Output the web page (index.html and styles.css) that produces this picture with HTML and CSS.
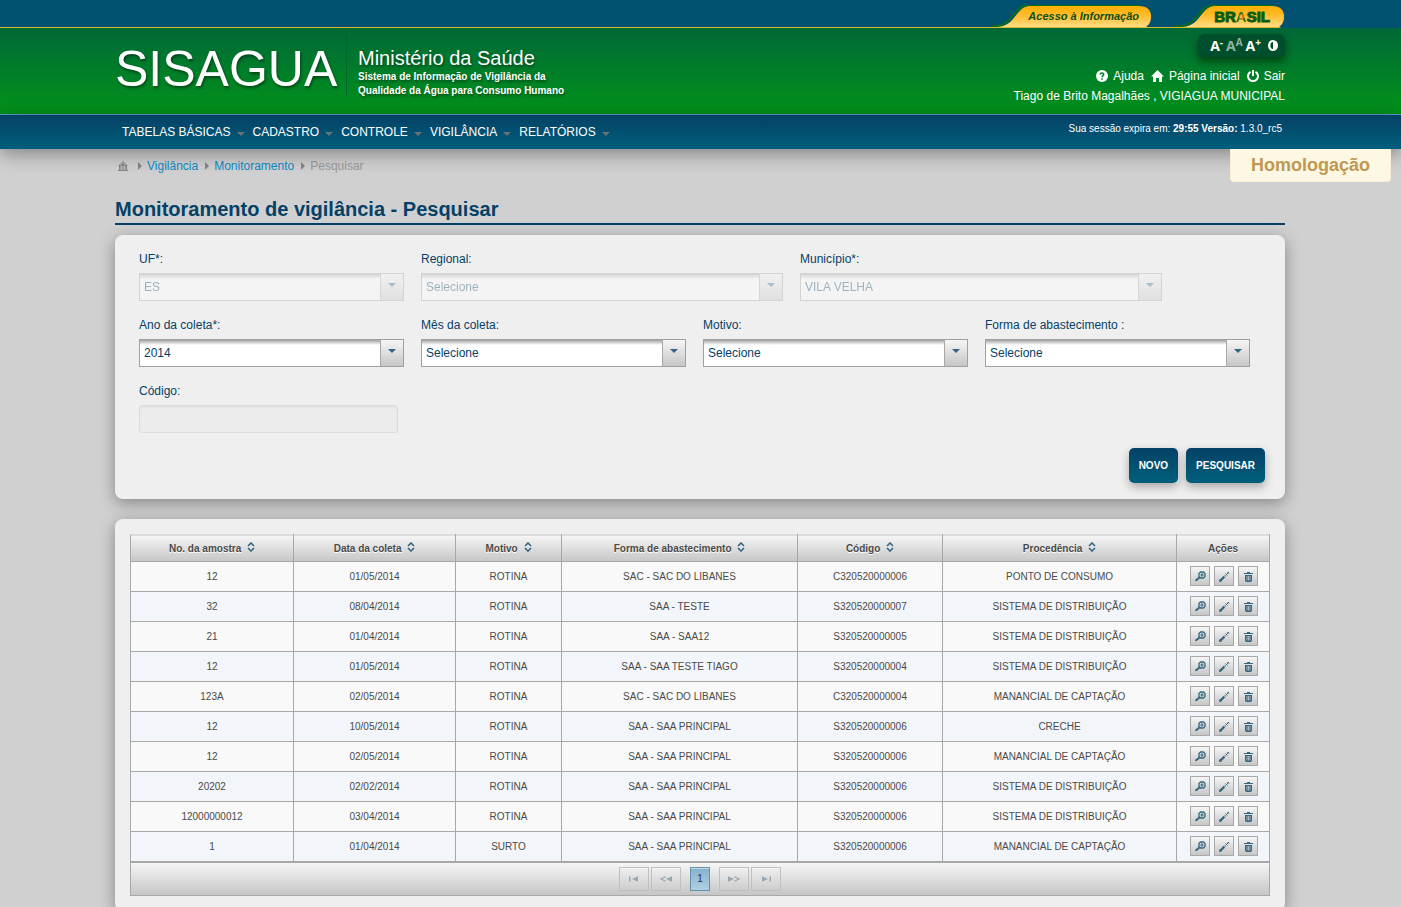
FILE: index.html
```html
<!DOCTYPE html>
<html lang="pt-BR">
<head>
<meta charset="utf-8">
<meta name="viewport" content="width=device-width, initial-scale=1">
<title>SISAGUA - Monitoramento de vigilância</title>
<link rel="stylesheet" href="styles.css">
</head>
<body>
<svg class="sprite" aria-hidden="true">
  <symbol id="tab-long" viewBox="0 0 160 22"><path d="M0 21.500C16 21 18 15 24 8C29 2 32 .5 38 .5H149" fill="none" stroke="#0a6b1c" stroke-width="2"/><path d="M6 22C18 21 21 15 26 9C31 3 34 1 40 1H148C156 1 160 5 160 11C160 16 159 19 155 22Z" fill="url(#gold)"/></symbol>
  <symbol id="tab-short" viewBox="0 0 110 22"><path d="M0 21.500C18 21 20 15 26 8C31 2 34 .5 40 .5H100" fill="none" stroke="#0a6b1c" stroke-width="2"/><path d="M8 22C20 21 23 15 28 9C33 3 36 1 42 1H98C106 1 110 5 110 11C110 16 109 19 105 22Z" fill="url(#gold)"/></symbol>
  <linearGradient id="gold" x1="0" y1="0" x2="0" y2="1"><stop offset="0" stop-color="#ffae00"/><stop offset=".45" stop-color="#ffbc2b"/><stop offset="1" stop-color="#ffdc85"/></linearGradient>
  <symbol id="i-help" viewBox="0 0 12 12"><circle cx="6" cy="6" r="6" fill="#fff"/><path d="M4.200 4.600C4.300 2.300 7.800 2.500 7.700 4.600C7.600 5.700 6 5.800 6 7.200M6 8.200V9.700" fill="none" stroke="#007a2b" stroke-width="1.500"/></symbol>
  <symbol id="i-house" viewBox="0 0 13 12"><path d="M6.500 0L13 6.500H11V12H8V8H5V12H2V6.500H0Z" fill="#fff"/></symbol>
  <symbol id="i-power" viewBox="0 0 12 12"><path d="M3.500 1.800A5 5 0 1 0 8.500 1.800M6 0V6" fill="none" stroke="#fff" stroke-width="2"/></symbol>
  <symbol id="i-contrast" viewBox="0 0 10 11"><ellipse cx="5" cy="5.500" rx="5" ry="5.500" fill="#fff"/><path d="M5 2C1.500 2 1.500 9 5 9Z" fill="#004d2c"/></symbol>
  <symbol id="i-home" viewBox="0 0 10 10"><path d="M5 0L10 5H9V9H10V10H0V9H1V5H0Z" fill="#858585"/><path d="M3 9V5H4V9M6 9V5H7V9M2 4L5 1.500L8 4" fill="none" stroke="#d0d0d0" stroke-width=".8"/></symbol>
  <symbol id="i-sort" viewBox="0 0 8 10"><path d="M1 4L4 1L7 4M1 6L4 9L7 6" fill="none" stroke="#38667f" stroke-width="1.600"/></symbol>
  <symbol id="i-view" viewBox="0 0 20 20"><path d="M10.500 6H13.500L15 7.500V10.500L13.500 12H10.500L9 10.500V7.500Z" fill="none" stroke="#38667f" stroke-width="1.300"/><path d="M10.300 9H13.700M12 7.300V10.700" fill="none" stroke="#38667f" stroke-width="1.200"/><path d="M9.500 11.500L5.500 14.800" fill="none" stroke="#38667f" stroke-width="2"/></symbol>
  <symbol id="i-edit" viewBox="0 0 20 20"><path d="M6.500 14.500L11.500 9.500" fill="none" stroke="#38667f" stroke-width="2.200" stroke-dasharray="5.500 1 1"/><path d="M5.500 15.500L6 13.500L7.500 15ZM11.500 7.500L13.500 9.500M12.500 8.500L15 6M13.500 6L15 7.500" fill="#38667f" stroke="#38667f" stroke-width="1"/></symbol>
  <symbol id="i-trash" viewBox="0 0 20 20"><path d="M6 7H15V8H6ZM9 6H12V7H9Z" fill="#38667f"/><path d="M7 9H14V14.500L13 16H8L7 14.500Z" fill="#38667f"/><path d="M9 10V14.500M10.500 10V14.500M12 10V14.500" stroke="#d8d8d8" stroke-width=".7"/></symbol>
  <symbol id="i-first" viewBox="0 0 10 6"><path d="M0 .5H1.500V5.500H0ZM3 3L9 .3V5.700Z" fill="#98a7af"/></symbol>
  <symbol id="i-prev" viewBox="0 0 12 6"><path d="M5.500 .8L1 3L5.500 5.200" fill="none" stroke="#98a7af" stroke-width="1.200"/><path d="M6 3L12 .3V5.700Z" fill="#98a7af"/></symbol>
</svg>

<div class="gov-bar">
  <div class="container gov-inner">
    <a class="gov-tab gov-info" href="#"><svg class="tab-shape" width="160" height="22"><use href="#tab-long"/></svg><span>Acesso à Informação</span></a>
    <a class="gov-tab gov-brasil" href="#"><svg class="tab-shape" width="110" height="22"><use href="#tab-short"/></svg><span>BR<span class="brasil-a">A</span>SIL</span></a>
  </div>
</div>

<header class="header">
  <div class="container header-inner">
    <div class="brand">
      <a class="logo" href="#">SISAGUA</a>
      <div class="ministry"><p class="ministry-name">Ministério da Saúde</p><p class="ministry-sub">Sistema de Informação de Vigilância da<br>Qualidade da Água para Consumo Humano</p></div>
    </div>
    <div class="account">
      <div class="access">
        <button type="button" aria-label="Diminuir fonte">A<sup>-</sup></button>
        <button type="button" class="dim" aria-label="Fonte normal">A<sup>A</sup></button>
        <button type="button" aria-label="Aumentar fonte">A<sup>+</sup></button>
        <button type="button" class="contrast" aria-label="Contraste"><svg width="10" height="11"><use href="#i-contrast"/></svg></button>
      </div>
      <div class="quick">
        <a href="#"><svg width="12" height="12"><use href="#i-help"/></svg>Ajuda</a>
        <a href="#"><svg width="13" height="12"><use href="#i-house"/></svg>Página inicial</a>
        <a href="#"><svg width="12" height="12"><use href="#i-power"/></svg>Sair</a>
      </div>
      <p class="user">Tiago de Brito Magalhães , VIGIAGUA MUNICIPAL</p>
    </div>
  </div>
</header>

<div class="nav-bar">
  <div class="container nav-inner">
    <nav class="menu"><a href="#">TABELAS BÁSICAS</a><a href="#">CADASTRO</a><a href="#">CONTROLE</a><a href="#">VIGILÂNCIA</a><a href="#">RELATÓRIOS</a></nav>
    <p class="session">Sua sessão expira em: <b>29:55 Versão:</b> 1.3.0_rc5</p>
  </div>
  <div class="environment">Homologação</div>
</div>

<main class="container">
  <nav class="crumbs" aria-label="Trilha"><a href="#" aria-label="Início"><svg width="10" height="10"><use href="#i-home"/></svg></a><a href="#">Vigilância</a><a href="#">Monitoramento</a><span>Pesquisar</span></nav>
  <h1>Monitoramento de vigilância - Pesquisar</h1>

  <form class="panel search">
    <div class="fields">
      <div class="field"><label for="uf">UF*:</label><span class="select off"><select id="uf" disabled><option>ES</option></select></span></div>
      <div class="field wide"><label for="regional">Regional:</label><span class="select off"><select id="regional" disabled><option>Selecione</option></select></span></div>
      <div class="field wide"><label for="municipio">Município*:</label><span class="select off"><select id="municipio" disabled><option>VILA VELHA</option></select></span></div>
    </div>
    <div class="fields">
      <div class="field"><label for="ano">Ano da coleta*:</label><span class="select"><select id="ano"><option>2014</option></select></span></div>
      <div class="field"><label for="mes">Mês da coleta:</label><span class="select"><select id="mes"><option>Selecione</option></select></span></div>
      <div class="field"><label for="motivo">Motivo:</label><span class="select"><select id="motivo"><option>Selecione</option></select></span></div>
      <div class="field"><label for="forma">Forma de abastecimento :</label><span class="select"><select id="forma"><option>Selecione</option></select></span></div>
    </div>
    <div class="fields">
      <div class="field"><label for="codigo">Código:</label><input id="codigo" type="text" disabled></div>
    </div>
    <div class="form-actions"><button type="button">NOVO</button><button type="submit">PESQUISAR</button></div>
  </form>

  <section class="panel results">
    <table>
      <colgroup><col class="c-sample"><col class="c-date"><col class="c-reason"><col class="c-supply"><col class="c-code"><col class="c-origin"><col class="c-actions"></colgroup>
      <thead><tr>
        <th>No. da amostra <svg width="8" height="10"><use href="#i-sort"/></svg></th>
        <th>Data da coleta <svg width="8" height="10"><use href="#i-sort"/></svg></th>
        <th>Motivo <svg width="8" height="10"><use href="#i-sort"/></svg></th>
        <th>Forma de abastecimento <svg width="8" height="10"><use href="#i-sort"/></svg></th>
        <th>Código <svg width="8" height="10"><use href="#i-sort"/></svg></th>
        <th>Procedência <svg width="8" height="10"><use href="#i-sort"/></svg></th>
        <th>Ações</th>
      </tr></thead>
      <tbody>
        <tr><td>12</td><td>01/05/2014</td><td>ROTINA</td><td>SAC - SAC DO LIBANES</td><td>C320520000006</td><td>PONTO DE CONSUMO</td><td><div class="row-actions"><button type="button" aria-label="Visualizar"><svg><use href="#i-view"/></svg></button><button type="button" aria-label="Editar"><svg><use href="#i-edit"/></svg></button><button type="button" aria-label="Excluir"><svg><use href="#i-trash"/></svg></button></div></td></tr>
        <tr><td>32</td><td>08/04/2014</td><td>ROTINA</td><td>SAA - TESTE</td><td>S320520000007</td><td>SISTEMA DE DISTRIBUIÇÃO</td><td><div class="row-actions"><button type="button" aria-label="Visualizar"><svg><use href="#i-view"/></svg></button><button type="button" aria-label="Editar"><svg><use href="#i-edit"/></svg></button><button type="button" aria-label="Excluir"><svg><use href="#i-trash"/></svg></button></div></td></tr>
        <tr><td>21</td><td>01/04/2014</td><td>ROTINA</td><td>SAA - SAA12</td><td>S320520000005</td><td>SISTEMA DE DISTRIBUIÇÃO</td><td><div class="row-actions"><button type="button" aria-label="Visualizar"><svg><use href="#i-view"/></svg></button><button type="button" aria-label="Editar"><svg><use href="#i-edit"/></svg></button><button type="button" aria-label="Excluir"><svg><use href="#i-trash"/></svg></button></div></td></tr>
        <tr><td>12</td><td>01/05/2014</td><td>ROTINA</td><td>SAA - SAA TESTE TIAGO</td><td>S320520000004</td><td>SISTEMA DE DISTRIBUIÇÃO</td><td><div class="row-actions"><button type="button" aria-label="Visualizar"><svg><use href="#i-view"/></svg></button><button type="button" aria-label="Editar"><svg><use href="#i-edit"/></svg></button><button type="button" aria-label="Excluir"><svg><use href="#i-trash"/></svg></button></div></td></tr>
        <tr><td>123A</td><td>02/05/2014</td><td>ROTINA</td><td>SAC - SAC DO LIBANES</td><td>C320520000004</td><td>MANANCIAL DE CAPTAÇÃO</td><td><div class="row-actions"><button type="button" aria-label="Visualizar"><svg><use href="#i-view"/></svg></button><button type="button" aria-label="Editar"><svg><use href="#i-edit"/></svg></button><button type="button" aria-label="Excluir"><svg><use href="#i-trash"/></svg></button></div></td></tr>
        <tr><td>12</td><td>10/05/2014</td><td>ROTINA</td><td>SAA - SAA PRINCIPAL</td><td>S320520000006</td><td>CRECHE</td><td><div class="row-actions"><button type="button" aria-label="Visualizar"><svg><use href="#i-view"/></svg></button><button type="button" aria-label="Editar"><svg><use href="#i-edit"/></svg></button><button type="button" aria-label="Excluir"><svg><use href="#i-trash"/></svg></button></div></td></tr>
        <tr><td>12</td><td>02/05/2014</td><td>ROTINA</td><td>SAA - SAA PRINCIPAL</td><td>S320520000006</td><td>MANANCIAL DE CAPTAÇÃO</td><td><div class="row-actions"><button type="button" aria-label="Visualizar"><svg><use href="#i-view"/></svg></button><button type="button" aria-label="Editar"><svg><use href="#i-edit"/></svg></button><button type="button" aria-label="Excluir"><svg><use href="#i-trash"/></svg></button></div></td></tr>
        <tr><td>20202</td><td>02/02/2014</td><td>ROTINA</td><td>SAA - SAA PRINCIPAL</td><td>S320520000006</td><td>SISTEMA DE DISTRIBUIÇÃO</td><td><div class="row-actions"><button type="button" aria-label="Visualizar"><svg><use href="#i-view"/></svg></button><button type="button" aria-label="Editar"><svg><use href="#i-edit"/></svg></button><button type="button" aria-label="Excluir"><svg><use href="#i-trash"/></svg></button></div></td></tr>
        <tr><td>12000000012</td><td>03/04/2014</td><td>ROTINA</td><td>SAA - SAA PRINCIPAL</td><td>S320520000006</td><td>SISTEMA DE DISTRIBUIÇÃO</td><td><div class="row-actions"><button type="button" aria-label="Visualizar"><svg><use href="#i-view"/></svg></button><button type="button" aria-label="Editar"><svg><use href="#i-edit"/></svg></button><button type="button" aria-label="Excluir"><svg><use href="#i-trash"/></svg></button></div></td></tr>
        <tr><td>1</td><td>01/04/2014</td><td>SURTO</td><td>SAA - SAA PRINCIPAL</td><td>S320520000006</td><td>MANANCIAL DE CAPTAÇÃO</td><td><div class="row-actions"><button type="button" aria-label="Visualizar"><svg><use href="#i-view"/></svg></button><button type="button" aria-label="Editar"><svg><use href="#i-edit"/></svg></button><button type="button" aria-label="Excluir"><svg><use href="#i-trash"/></svg></button></div></td></tr>
      </tbody>
    </table>
    <div class="pager">
      <button type="button" disabled aria-label="Primeira"><svg width="10" height="6"><use href="#i-first"/></svg></button>
      <button type="button" disabled aria-label="Anterior"><svg width="12" height="6"><use href="#i-prev"/></svg></button>
      <button type="button" class="current">1</button>
      <button type="button" disabled aria-label="Próxima"><svg class="flip" width="12" height="6"><use href="#i-prev"/></svg></button>
      <button type="button" disabled aria-label="Última"><svg class="flip" width="10" height="6"><use href="#i-first"/></svg></button>
    </div>
  </section>
</main>
</body>
</html>
```
FILE: styles.css
```css
* { box-sizing: border-box; }
body { margin: 0; background: #d0d0d0; color: #054166; font: 12px/16px "Liberation Sans", Arial, sans-serif; }
p, h1 { margin: 0; }
a { color: inherit; text-decoration: none; }
button, input, select { font: inherit; color: inherit; margin: 0; }
.sprite { position: absolute; width: 0; height: 0; }
.container { max-width: 1171px; margin: 0 auto; padding-right: 1px; }

.gov-bar { background: linear-gradient(transparent 1px, #d9b92a 1px) left bottom / calc(50% + 580px) 2px no-repeat, #025170; }
.gov-inner { display: flex; justify-content: flex-end; gap: 23px; height: 28px; padding-top: 5px; padding-right: 2px; }
.gov-tab { position: relative; display: flex; justify-content: flex-end; height: 22px; line-height: 22px; color: #0b4d12; font-weight: bold; }
.tab-shape { position: absolute; inset: 0; }
.gov-tab > span { position: relative; }
.gov-info { width: 160px; padding-right: 12px; font-size: 11px; font-style: italic; }
.gov-brasil { width: 110px; padding-right: 14px; color: #0b5c12; font-size: 15px; line-height: 23px; -webkit-text-stroke: 1px #0b5c12; }
.brasil-a { background: radial-gradient(circle at 50% 52%, #e0661c 2px, #2c7414 3px); background-clip: text; color: transparent; -webkit-text-stroke: 0; }

.header { background: linear-gradient(#006838, #00931a); border-bottom: 1px solid #5f9fc4; color: #fff; }
.header-inner { display: flex; justify-content: space-between; height: 86px; }
.brand { display: flex; text-shadow: 1px 2px 3px rgba(0, 0, 0, .45); }
.logo { width: 232px; height: 68px; font-size: 50px; line-height: 82px; border-right: 1px solid #00662c; }
.ministry { padding: 18px 0 0 11px; }
.ministry-name { font-size: 20px; line-height: 24px; }
.ministry-sub { font-size: 10px; font-weight: bold; line-height: 14px; }
.account { display: flex; flex-direction: column; align-items: flex-end; padding-top: 6px; }
.access { display: flex; align-items: center; justify-content: flex-end; gap: 3px; width: 87px; height: 23px; padding-right: 7px; border-radius: 6px; background: #004f2c; box-shadow: 0 4px 8px rgba(0, 40, 0, .7); }
.access button { display: flex; padding: 0; border: 0; background: none; color: #fff; font: bold 14px/18px "Open Sans", sans-serif; }
.access sup { font-size: 10px; line-height: 11px; }
.access .dim { color: #8fb5a0; }
.access .contrast { margin-left: 4px; }
.quick { display: flex; gap: 7px; margin-top: 11px; line-height: 16px; }
.quick a { display: flex; align-items: center; gap: 5px; }
.user { margin-top: 4px; }

.nav-bar { position: relative; background: linear-gradient(#054166, #005f7c); color: #fff; box-shadow: 0 4px 20px rgba(0, 0, 0, .4); }
.nav-inner { display: flex; justify-content: space-between; height: 34px; }
.menu { display: flex; gap: 8px; padding-left: 7px; line-height: 34px; }
.menu a { display: flex; align-items: center; gap: 6px; }
.menu a::after { content: ""; margin-top: 4px; border: 4px solid transparent; border-top-color: #687178; border-bottom: 0; }
.session { padding-right: 3px; font-size: 10px; line-height: 28px; }
.environment { position: absolute; top: 100%; right: 10px; width: 161px; border: 1px solid #fbeed5; border-top: 0; border-radius: 0 0 4px 4px; background: #fcf8e3; color: #c09853; font-size: 18px; font-weight: bold; line-height: 32px; text-align: center; }

.crumbs { display: flex; align-items: center; gap: 5px; height: 33px; padding-left: 3px; color: #999; }
.crumbs > * { display: flex; align-items: center; gap: 7px; }
.crumbs > *:not(:last-child)::after { content: ""; border: 4px solid transparent; border-left-color: #858585; border-right: 0; }
.crumbs a { color: #0e8ac6; }
.crumbs a:first-child { gap: 10px; }
h1 { padding-top: 14px; border-bottom: 2px solid #054166; font-size: 20px; line-height: 26px; padding-bottom: 1px; }

.panel { border-radius: 8px; background: #efefef; box-shadow: 0 4px 16px rgba(0, 0, 0, .36); }
.search { display: flex; flex-direction: column; gap: 16px; margin-top: 10px; padding: 16px 20px 16px 24px; }
.fields { display: flex; flex-wrap: wrap; gap: 17px; }
.field { display: flex; flex-direction: column; gap: 6px; width: 265px; }
.field.wide { width: 362px; }
.select { position: relative; display: flex; height: 28px; }
.select::after { content: ""; position: absolute; top: 10px; right: 8px; border: 4px solid transparent; border-top-color: #2f6583; border-bottom: 0; pointer-events: none; }
.select select { appearance: none; width: 100%; padding: 0 28px 0 4px; border: 1px solid #a0a0a0; border-radius: 0; color: #054166; background: linear-gradient(#a8a8a8, #a8a8a8) right 22px top / 1px 100% no-repeat, linear-gradient(#f6f6f6, #c6c6c6) right / 22px 100% no-repeat, linear-gradient(#a0a0a0, #fff 5px); }
.select.off { opacity: .35; }
.select.off select { opacity: 1; }
.field input { width: 259px; height: 28px; border: 1px solid #dcdcdc; border-radius: 3px; background: #ececec; box-shadow: inset 0 2px 2px #e2e2e2; }
.form-actions { display: flex; justify-content: flex-end; gap: 8px; margin-top: -1px; }
.form-actions button { height: 35px; padding: 0 10px; border: 0; border-radius: 5px; background: linear-gradient(#054166, #005f7c); box-shadow: 0 4px 10px rgba(0, 0, 0, .3); color: #fff; font-size: 10px; font-weight: bold; }

.results { margin-top: 20px; padding: 15px; }
table { width: 100%; table-layout: fixed; border-collapse: collapse; color: #4a4a4a; font-size: 10px; text-align: center; }
.c-sample { width: 163px; }
.c-date { width: 162px; }
.c-reason { width: 106px; }
.c-supply { width: 236px; }
.c-code { width: 145px; }
.c-origin { width: 234px; }
.c-actions { width: 93px; }
th, td { padding: 0; border: 1px solid #a8a8a8; }
th { height: 27px; padding-top: 2px; border-top-color: #d9d9d9; background: linear-gradient(#f6f6f6, #c6c6c6); text-shadow: 0 1px 0 #fff; }
th svg { margin-left: 3px; }
td { height: 30px; background: #f9f9f9; }
tbody tr:nth-child(even) td { background: #f2f5f9; }
.row-actions { display: flex; justify-content: center; gap: 4px; padding: 0 0 2px 2px; }
.row-actions button { display: flex; width: 20px; height: 20px; padding: 0; border: 1px solid #a8a8a8; background: linear-gradient(#f6f6f6, #c6c6c6); }
.row-actions svg { flex: none; width: 20px; height: 20px; margin: -1px; }
.pager { display: flex; align-items: center; justify-content: center; gap: 2px; height: 34px; border: 1px solid #a8a8a8; background: linear-gradient(#f6f6f6, #c6c6c6); }
.pager button { display: flex; align-items: center; justify-content: center; width: 30px; height: 24px; padding: 0; border: 1px solid #c0c0c0; background: transparent; box-shadow: inset 0 1px 0 rgba(255, 255, 255, .5); }
.pager .current { width: 20px; margin: 0 7px; border-color: #6393ac; background: linear-gradient(#85b2cb, #afcfe1); color: #1d3545; font-size: 10px; }
.flip { transform: scaleX(-1); }
```
